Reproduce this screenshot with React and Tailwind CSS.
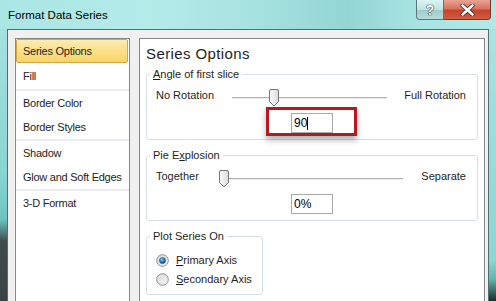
import React from 'react';

const font = "font-['Liberation_Sans',Arial,sans-serif]";

const Thumb = () => (
  <svg width="10" height="18" viewBox="0 0 10 18">
    <defs>
      <linearGradient id="thumbFill" x1="0" y1="0" x2="1" y2="0">
        <stop offset="0" stopColor="#fdfdfd" />
        <stop offset="1" stopColor="#d9d9d9" />
      </linearGradient>
    </defs>
    <path
      d="M2 0.5H8Q9.5 0.5 9.5 2V12.5L5 17L0.5 12.5V2Q0.5 0.5 2 0.5Z"
      fill="url(#thumbFill)"
      stroke="#777"
    />
  </svg>
);

const Radio = ({ checked }) => (
  <svg width="13" height="13" viewBox="0 0 13 13">
    <defs>
      <linearGradient id="radioBg" x1="0" y1="0" x2="1" y2="1">
        <stop offset="0" stopColor="#d4d4d4" />
        <stop offset="1" stopColor="#fafafa" />
      </linearGradient>
      <radialGradient id="radioDot" cx="0.4" cy="0.35" r="0.7">
        <stop offset="0" stopColor="#8fd0f5" />
        <stop offset="0.5" stopColor="#2a7fc4" />
        <stop offset="1" stopColor="#0d3f73" />
      </radialGradient>
    </defs>
    <circle cx="6.5" cy="6.5" r="5.8" fill="url(#radioBg)" stroke="#8e8f8f" strokeWidth="1" />
    <circle cx="6.5" cy="6.5" r="4.2" fill="none" stroke="#e6e6e6" strokeWidth="0.8" />
    {checked && <circle cx="6.5" cy="6.5" r="3.1" fill="url(#radioDot)" stroke="#1c4a78" strokeWidth="0.5" />}
  </svg>
);

const Slider = ({ width, thumb }) => (
  <div className={`relative h-[18px] ${width}`}>
    <div className="absolute inset-x-0 top-[8px] h-px bg-[#b2b2b2]" />
    <div className="absolute inset-x-0 top-[9px] h-px bg-[#ececec]" />
    <div className={`absolute top-0 ${thumb}`}>
      <Thumb />
    </div>
  </div>
);

const Group = ({ legend, className, children }) => (
  <fieldset className={`border border-[#d5dfe5] rounded-[3px] px-0 ${className}`}>
    <legend className="ml-[3px] px-[3px] leading-[14px] text-[11px] text-[#1e1e1e]">{legend}</legend>
    {children}
  </fieldset>
);

const ValueBox = ({ value }) => (
  <div className="w-[42px] h-[20px] border border-[#a9a9a9] bg-white pl-[2px] text-[12px] leading-[18px] text-black flex items-center">
    <span>{value}</span>
  </div>
);

const navGroups = [
  [{ label: 'Series Options', selected: true, h: 'h-[24px]' }, { label: 'Fill', h: 'h-[25px] mt-[1px]' }],
  [{ label: 'Border Color', h: 'h-[24px]' }, { label: 'Border Styles', h: 'h-[24px]' }],
  [{ label: 'Shadow', h: 'h-[24px]' }, { label: 'Glow and Soft Edges', h: 'h-[24px]' }],
  [{ label: '3-D Format', h: 'h-[24px]' }],
];

export default function App() {
  return (
    <div className={`w-[496px] h-[301px] overflow-hidden flex flex-col ${font} bg-[#9fdfdd]`}>
      {/* Title bar */}
      <div className="h-[29px] flex items-start bg-[linear-gradient(90deg,#a9e6e4_0%,#b4ecea_30%,#a3e0de_55%,#92d6d3_70%,#a8e4e2_85%,#b2e9e7_100%)]">
        <div className="pl-[8px] pt-[8px] text-[11.5px] leading-[14px] text-black">Format Data Series</div>
        <div className="ml-auto mr-[5px] flex">
          <div className="w-[28px] h-[20px] border border-t-0 border-[#5b7676] rounded-bl-[4px] bg-[linear-gradient(to_bottom,#d9f3f2_0%,#bfe5e3_50%,#9ccac8_51%,#b6dcda_100%)] flex items-center justify-center">
            <span className="text-[14px] font-bold leading-none text-white [text-shadow:0_0_1px_#333,0_0_1px_#333,0_0_1px_#333]">?</span>
          </div>
          <div className="w-[47px] h-[20px] border border-t-0 border-l-0 border-[#6b3a32] rounded-br-[4px] bg-[linear-gradient(to_bottom,#eaa394_0%,#d9735f_45%,#c5432c_55%,#d25c3f_100%)] flex items-center justify-center">
            <svg width="15" height="12" viewBox="0 0 15 12">
              <path d="M2.5 1.5L12.5 10.5M12.5 1.5L2.5 10.5" stroke="#3a2a28" strokeWidth="4.2" strokeLinecap="round" />
              <path d="M2.5 1.5L12.5 10.5M12.5 1.5L2.5 10.5" stroke="#ffffff" strokeWidth="2.6" strokeLinecap="round" />
            </svg>
          </div>
        </div>
      </div>

      {/* Window body */}
      <div className="flex-1 flex">
        <div className="w-[7px] bg-[linear-gradient(to_bottom,#a5e2e0_0%,#86d4d1_55%,#6cc4c1_70%,#3f4c4b_78%,#394443_100%)]" />
        <div className="flex-1 flex gap-[9px] pt-[8px] pl-[7px] pr-[3px] bg-[#f0f0f0] border border-b-0 border-[#526e6d]">
          {/* Category list */}
          <div className="w-[115px] bg-white border border-b-0 border-[#828790] text-[11px] tracking-[-0.25px] text-[#1e1e1e]">
            {navGroups.map((group, gi) => (
              <div key={gi}>
                {gi > 0 && <div className="h-[2px] bg-[#eaedf1]" />}
                {group.map((item) =>
                  item.selected ? (
                    <div
                      key={item.label}
                      className={`${item.h} mr-[1px] flex items-center pl-[6px] border border-[#d9a53c] rounded-[2px] bg-[linear-gradient(to_bottom,#fdedb3_0%,#fbe08c_45%,#f9d468_100%)]`}
                    >
                      {item.label}
                    </div>
                  ) : (
                    <div key={item.label} className={`${item.h} flex items-center pl-[7px]`}>
                      {item.label}
                    </div>
                  )
                )}
              </div>
            ))}
          </div>

          {/* Options panel */}
          <div className="w-[346px] bg-white border border-b-0 border-[#828790] px-[6px] text-[11px] text-[#1e1e1e]">
            <div className="mt-[5px] text-[15px] tracking-[0.4px] leading-[20px]">Series Options</div>

            <Group
              className="mt-[3px] pb-[6px]"
              legend={<><span className="underline">A</span>ngle of first slice</>}
            >
              <div className="mt-[8px] h-[17px] flex items-start pl-[9px] pr-[11px]">
                <div className="w-[76px] leading-[12px]">No Rotation</div>
                <Slider width="w-[155px]" thumb="left-[37px]" />
                <div className="ml-auto leading-[12px]">Full Rotation</div>
              </div>
              <div className="mt-[7px] mx-auto w-[42px] relative">
                <div className="absolute -left-[25px] -right-[24px] -top-[6px] -bottom-[3px] border-[3px] border-[#b51a1f] shadow-[0_4px_6px_rgba(0,0,0,0.3)]" />
                <div className="relative">
                  <div className="w-[42px] h-[20px] border border-[#a9a9a9] bg-white pl-[2px] text-[12px] leading-[18px] text-black flex items-center">
                    <span>90</span>
                    <span className="inline-block w-px h-[13px] bg-black" />
                  </div>
                </div>
              </div>
            </Group>

            <Group
              className="mt-[8px] pb-[6px]"
              legend={<>Pie E<span className="underline">x</span>plosion</>}
            >
              <div className="mt-[8px] h-[17px] flex items-start pl-[9px] pr-[11px]">
                <div className="w-[67px] leading-[12px]">Together</div>
                <Slider width="w-[180px]" thumb="-left-[4px]" />
                <div className="ml-auto leading-[12px]">Separate</div>
              </div>
              <div className="mt-[7px] mx-auto w-[42px]">
                <ValueBox value="0%" />
              </div>
            </Group>

            <Group className="mt-[8px] pb-[5px] w-[117px]" legend="Plot Series On">
              <div className="mt-[8px] pl-[9px]">
                <div className="h-[19px] flex items-center gap-[7px]">
                  <Radio checked />
                  <span><span className="underline">P</span>rimary Axis</span>
                </div>
                <div className="h-[19px] flex items-center gap-[7px]">
                  <Radio />
                  <span><span className="underline">S</span>econdary Axis</span>
                </div>
              </div>
            </Group>
          </div>
        </div>
        <div className="w-[7px] bg-[linear-gradient(to_bottom,#a8e4e2_0%,#8ad6d3_85%,#5fb4b1_92%,#1d2a29_100%)]" />
      </div>
    </div>
  );
}
